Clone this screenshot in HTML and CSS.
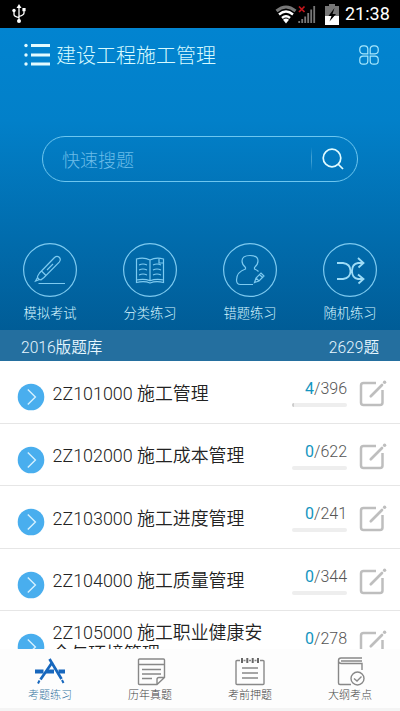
FILE: index.html
```html
<!DOCTYPE html>
<html lang="zh-CN">
<head>
<meta charset="utf-8">
<title>建设工程施工管理</title>
<link rel="stylesheet" href="styles.css">
</head>
<body>
<svg class="defs" width="0" height="0">
  <symbol id="go" viewBox="0 0 28 28"><circle cx="14" cy="14" r="13.3" fill="#49aeee"/><path d="M10.8 6.5l7.6 7.5-7.6 7.5" fill="none" stroke="#d5f1ff" stroke-width="1.4"/></symbol>
  <symbol id="edit" viewBox="0 0 28 28"><path d="M17 4H4.500q-2.500 0-2.500 2.500V23.500q0 2.500 2.500 2.500H21q2.500 0 2.500-2.500V11" fill="none" stroke="#bebebe" stroke-width="2.500"/><path d="M11.800 17.200L23 6" fill="none" stroke="#bebebe" stroke-width="2.700" stroke-linecap="round"/><circle cx="25.600" cy="3.200" r="1.700" fill="#bebebe"/></symbol>
</svg>
<div class="phone">
  <div class="status">
    <svg class="usb" width="14" height="20" viewBox="0 0 14 20" fill="none" stroke="#fff" stroke-width="1.300"><path d="M7 3v13M2 7v3.500q0 2 5 3M12 6v3q0 2-5 3.500"/><path d="M7 0l2.500 4h-5z" fill="#fff" stroke="none"/><circle cx="7" cy="17" r="2" fill="#fff" stroke="none"/><circle cx="2" cy="6.500" r="1.700" fill="#fff" stroke="none"/><path d="M10.400 4h3.200v3.200h-3.200z" fill="#fff" stroke="none"/></svg>
    <svg class="wifi" width="22" height="19" viewBox="0 0 22 19" fill="none"><path d="M1.500 6Q11-2 20.500 6" stroke="#777" stroke-width="3"/><path d="M4 9.500q7-6 14 0M7 13q4-3.500 8 0" stroke="#fff" stroke-width="2.400"/><path d="M8 14.700q3-2.400 6 0L11 18.500z" fill="#fff"/></svg>
    <svg class="signal" width="18" height="19" viewBox="0 0 18 19" fill="none"><path d="M1.200 16v2M4.200 14v4M7.200 11.500V18M10.200 8v10M13.200 4.500V18M16.200 1v17" stroke="#777" stroke-width="1.800"/><path d="M1 1.500l5.500 5.500M6.500 1.500L1 7" stroke="#c4161c" stroke-width="1.700"/></svg>
    <svg class="battery" width="14" height="21" viewBox="0 0 14 21"><path d="M4 0h6v2h4v10H0V2h4z" fill="#777"/><path d="M0 12h14v9H0z" fill="#fff"/><path d="M9.500 4L3.500 12h3l-2 5.500 6.500-7.500H7.500z" fill="#000"/></svg>
    <span class="time">21:38</span>
  </div>
  <header class="hero">
    <div class="titlebar">
      <svg width="26" height="24" viewBox="0 0 26 24"><g fill="#e3fbff"><circle cx="2" cy="2.500" r="1.700"/><circle cx="2" cy="12" r="1.700"/><circle cx="2" cy="21" r="1.700"/><rect x="7" y="1" width="19" height="3"/><rect x="7" y="10.500" width="19" height="3"/><rect x="7" y="19.500" width="19" height="3"/></g></svg>
      <h1>建设工程施工管理</h1>
      <svg class="apps" width="20" height="20" viewBox="0 0 20 20" fill="none" stroke="#a8e7fc" stroke-width="1.200"><path d="M8.800 8.800H4A3.200 3.200 0 0 1 .8 5.600V4A3.200 3.200 0 0 1 4 .8h1.600A3.200 3.200 0 0 1 8.800 4zM11.200 8.800H16a3.200 3.200 0 0 0 3.200-3.200V4A3.200 3.200 0 0 0 16 .8h-1.600A3.200 3.200 0 0 0 11.200 4zM8.800 11.200H4a3.200 3.200 0 0 0-3.200 3.200V16A3.200 3.200 0 0 0 4 19.200h1.600A3.200 3.200 0 0 0 8.800 16zM11.200 11.200H16a3.200 3.200 0 0 1 3.200 3.200V16a3.200 3.200 0 0 1-3.200 3.200h-1.600a3.200 3.200 0 0 1-3.200-3.200z"/></svg>
    </div>
    <div class="search">
      <span class="placeholder">快速搜题</span>
      <i class="divider"></i>
      <svg width="22" height="22" viewBox="0 0 22 22" fill="none" stroke="#e0fbff" stroke-width="1.700"><circle cx="10" cy="10" r="8.800"/><path d="M16 16l5 5"/></svg>
    </div>
    <nav class="modes">
      <a><svg width="54" height="54" viewBox="0 0 54 54"><circle cx="27" cy="27" r="26.400"/><path d="M16.500 30L31.500 14.500q2.500-2.300 4.700-.2t0 4.800L21 34.500l-3 2.300q-3.500-.3-3.500-3.500zM18.500 28l4.500 4.500M24 27l6-6M14.500 34.500L12.500 38l4-1.500M15.500 40.500H42"/></svg><span>模拟考试</span></a>
      <a><svg width="54" height="54" viewBox="0 0 54 54"><circle cx="27" cy="27" r="26.400"/><path d="M27 17q-6-3-13.500-1v21q8-1.500 13.500.8 6-2.300 13.500-.8V16Q33 14 27 17v21M13.500 37v2.500q8-1.800 13.500.5 6-2.300 13.500-.5V37M36 15v5h4M16 22q4-2 8 0M16 27q4-2 8 0M16 32q4-2 8 0M30 22q4-2 8 0M30 27q4-2 8 0M30 32q4-2 8 0"/></svg><span>分类练习</span></a>
      <a><svg width="54" height="54" viewBox="0 0 54 54"><circle cx="27" cy="27" r="26.400"/><path d="M35.500 28.500q-1.500-1.500-4-2.500v-1.500q3.500-3 3.500-6.500 0-5.500-8-5.500t-8 5.500q0 3.500 3.500 6.500V26q-9 3-9 11 0 4.500 4 4.500H30M31.500 39.500l1.500-4.500 5-5 3 3-5 5zM33 35l3 3M36.500 31.500l3 3"/></svg><span>错题练习</span></a>
      <a><svg width="54" height="54" viewBox="0 0 54 54"><circle cx="27" cy="27" r="26.400"/><path class="bold" d="M14 20h6q7.500 1 7.500 8t-7.500 8h-6M40 20h-5q-6 1-6 8t6 8h5M35 15l5.500 5-5 4.500M35 31.500l5.500 4.500-5 4.500"/></svg><span>随机练习</span></a>
    </nav>
    <div class="bank"><span>2016版题库</span><span>2629题</span></div>
  </header>
  <main class="list">
    <div class="row"><svg class="go"><use href="#go"/></svg><p>2Z101000 施工管理</p><div class="count"><span><b>4</b>/396</span><i class="track"><i class="fill"></i></i></div><svg class="edit"><use href="#edit"/></svg></div>
    <div class="row"><svg class="go"><use href="#go"/></svg><p>2Z102000 施工成本管理</p><div class="count"><span><b>0</b>/622</span><i class="track"></i></div><svg class="edit"><use href="#edit"/></svg></div>
    <div class="row"><svg class="go"><use href="#go"/></svg><p>2Z103000 施工进度管理</p><div class="count"><span><b>0</b>/241</span><i class="track"></i></div><svg class="edit"><use href="#edit"/></svg></div>
    <div class="row"><svg class="go"><use href="#go"/></svg><p>2Z104000 施工质量管理</p><div class="count"><span><b>0</b>/344</span><i class="track"></i></div><svg class="edit"><use href="#edit"/></svg></div>
    <div class="row"><svg class="go"><use href="#go"/></svg><p>2Z105000 施工职业健康安全与环境管理</p><div class="count"><span><b>0</b>/278</span><i class="track"></i></div><svg class="edit"><use href="#edit"/></svg></div>
  </main>
  <footer class="tabs">
    <a class="active"><svg width="32" height="30" viewBox="0 0 32 30" fill="none" stroke="#1767bd"><path d="M1 14.500h8.500M12 14.500h8M24.500 14.500H31" stroke-width="4"/><path d="M18.500 5L6.500 22.500M15.500 2l12 20" stroke-width="2.700"/><path d="M5.500 23.500L4 26.500M28 23l1.500 3" stroke-width="2"/></svg><span>考题练习</span></a>
    <a><svg width="32" height="30" viewBox="0 0 32 30"><path d="M5.500 2h24q1 0 1 1v17.500l-7.500 7H5.500q-1 0-1-1V3q0-1 1-1zM4.500 7.500h26M30.500 20.500H25q-2 0-2 2v5M8 12.500h19M8 17h19M8 21.500h10"/></svg><span>历年真题</span></a>
    <a><svg width="32" height="30" viewBox="0 0 32 30"><path d="M6 3.500H3q-1 0-1 1v22q0 1 1 1h26q1 0 1-1v-22q0-1-1-1h-3M9.500 3.500h2M15 3.500h2M20.500 3.500h2M8 11h16M8 16h16M8 21h16"/><path class="pins" d="M8 1v5M13.300 1v5M18.700 1v5M24 1v5"/></svg><span>考前押题</span></a>
    <a><svg width="32" height="30" viewBox="0 0 32 30"><path d="M28 1H7Q4.500 1 4.500 3.500V26q0 1.500 1.500 1.500h11M28 13V6.500H7.500Q4.500 6.500 4.500 4M7 4h21"/><circle cx="23.500" cy="21.500" r="6.500"/><path d="M20 21.500l3 2.500 4.500-4.500"/></svg><span>大纲考点</span></a>
  </footer>
</div>
</body>
</html>
```
FILE: styles.css
```css
* { box-sizing: border-box; }
body { margin: 0; font-family: Roboto, "Noto Sans CJK SC", sans-serif; font-weight: 300; }
.defs { display: block; }
svg { display: block; flex: none; }
.phone { width: 400px; height: 711px; overflow: hidden; display: flex; flex-direction: column; background: #fff; }
.status { height: 28px; flex: none; background: #000; color: #fff; display: flex; align-items: center; padding: 0 10px 0 12px; }
.wifi { margin-left: auto; }
.signal { margin-left: 1px; }
.battery { margin-left: 9px; }
.time { width: 45px; margin-left: 6px; font-size: 18px; font-weight: 400; line-height: 28px; white-space: nowrap; }
.hero { height: 333px; flex: none; display: flex; flex-direction: column; background: linear-gradient(#0284d0, #0280c9 28%, #00578f); color: #dcf8ff; }
.titlebar { height: 54px; display: flex; align-items: center; padding: 0 21px 0 24px; }
h1 { margin: 0 auto 0 6px; padding-top: 1px; font-size: 20px; font-weight: 300; line-height: 28px; color: #d7faff; }
.search { height: 46px; margin: 54px 42px 0; border: 1px solid #6dc6ef; border-radius: 23px; display: flex; align-items: center; padding: 0 13px 0 19px; }
.placeholder { font-size: 18px; color: #6bbce8; margin-right: auto; }
.divider { width: 1px; height: 24px; background: linear-gradient(#3e9fd200, #3e9fd2 40%, #3e9fd2 60%, #3e9fd200); margin-right: 10px; }
.modes { display: grid; grid-template-columns: repeat(4, 100px); margin-top: 61px; }
.modes a { display: flex; flex-direction: column; align-items: center; gap: 7px; font-size: 13.3px; line-height: 20px; color: #d6f5ff; }
.modes svg { fill: none; stroke: #7dcaf0; stroke-width: 1.2; }
.modes .bold { stroke: #9edcf6; stroke-width: 1.8; }
.bank { height: 31px; margin-top: auto; background: #246f9f; display: flex; align-items: center; justify-content: space-between; padding: 0 21px; font-size: 15.6px; color: #e8f7ff; font-weight: 350; }
.list { height: 288px; flex: none; overflow: hidden; }
.row { height: 62.5px; display: flex; align-items: flex-start; border-bottom: 1px solid #e6e6e6; padding: 0 13px 0 16.5px; }
.go { width: 28px; height: 28px; margin-top: 22px; }
.row p { align-self: center; width: 220px; margin: 3px auto 0 8px; font-size: 17.9px; line-height: 21px; color: #222; font-weight: 350; }
.count { width: 55px; margin-top: 18px; display: flex; flex-direction: column; align-items: flex-end; font-size: 16px; line-height: 20px; color: #555; font-weight: 350; }
.count b { font-weight: 400; color: #1495c0; }
.track { width: 55px; height: 4px; margin-top: 4px; border-radius: 2px; background: #eee; overflow: hidden; }
.fill { display: block; width: 3%; height: 4px; background: #ccc; }
.edit { width: 28px; height: 28px; margin: 18px 0 0 12px; }
.tabs { height: 62px; flex: none; display: grid; grid-template-columns: repeat(4, 1fr); background: #fdfdfd; border-bottom: 3px solid #f4f4f4; }
.tabs a { display: flex; flex-direction: column; align-items: center; padding-top: 8px; font-size: 11px; line-height: 18px; color: #444; }
.tabs svg:not([stroke]) { fill: none; stroke: #888; stroke-width: 1.4; }
.tabs .pins { stroke-width: 2; stroke: #666; }
.tabs .active { color: #3c7aa5; }
```
